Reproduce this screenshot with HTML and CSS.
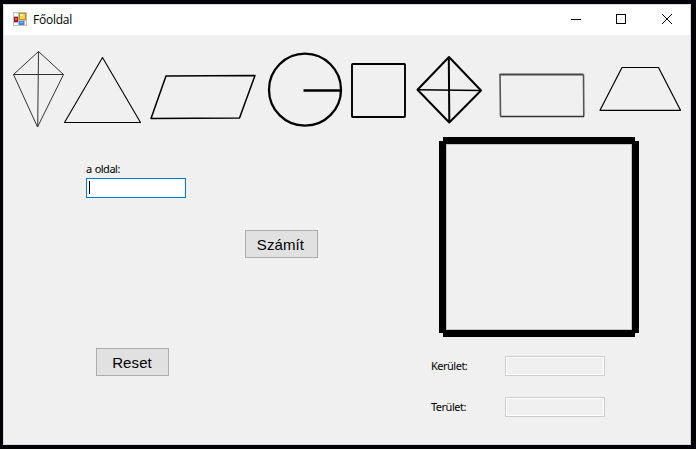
FILE: index.html
```html
<!DOCTYPE html>
<html lang="hu">
<head>
<meta charset="utf-8">
<title>Főoldal</title>
<link rel="stylesheet" href="styles.css">
</head>
<body>
<div class="desktop">
<div class="window">
  <header class="titlebar">
    <svg class="app-icon" width="14" height="14" viewBox="0 0 14 14" shape-rendering="crispEdges">
      <path fill="#b9bcc0" d="M0 0h14v14H0z"/>
      <path fill="#fff" d="M1 1h4v3H1zM1 11h4v2H1zM12 9h1v4h-1z"/>
      <path fill="#a31515" d="M1 5h4v5H1z"/><path fill="#e8695a" d="M2 6h2v2H2z"/>
      <path fill="#c98b08" d="M6 1h7v7H6z"/><path fill="#ffd34e" d="M7 2h5v5H7z"/><path fill="#fff0a8" d="M7 2h3v2H7z"/>
      <path fill="#4a83de" d="M6 9h5v4H6z"/><path fill="#8fbaf8" d="M7 10h3v1H7z"/>
    </svg>
    <h1 class="title">Főoldal</h1>
    <div class="controls">
      <svg width="45" height="30" viewBox="0 0 45 30" shape-rendering="crispEdges"><path d="M15 14.500h10"/></svg>
      <svg width="45" height="30" viewBox="0 0 45 30" shape-rendering="crispEdges"><path d="M15.500 9.500h9v9h-9z"/></svg>
      <svg width="45" height="30" viewBox="0 0 45 30"><path d="M16 9l10 10M26 9l-10 10"/></svg>
    </div>
  </header>
  <nav class="shapes">
    <svg width="60" height="95" viewBox="4 35 60 95"><path stroke="#333" stroke-width="1" d="M38.500 51.500L63.500 74.500 37.500 127 13.500 74.500zM13.500 74.500h50M38.500 51.500L37.700 127"/></svg>
    <svg width="82" height="95" viewBox="64 35 82 95"><path stroke-width="1.100" d="M102.500 57.500L140.500 122.500h-76z"/></svg>
    <svg width="116" height="95" viewBox="146 35 116 95"><path stroke-width="1.500" d="M166 76L255 75.500 239.500 118 151 118.500z"/></svg>
    <svg width="84" height="95" viewBox="262 35 84 95"><circle cx="305" cy="89.700" r="36" stroke-width="2.300"/><path stroke-width="2.500" d="M303.500 90.500H341"/></svg>
    <svg width="65" height="95" viewBox="346 35 65 95"><rect x="352" y="64" width="53" height="53" rx=".7" stroke-width="1.900"/></svg>
    <svg width="79" height="95" viewBox="411 35 79 95"><path stroke-width="2" d="M449 57L481 90.500 449.300 122.500 417.500 89.700zM448.800 57L449.300 122.500"/><path stroke-width="1.500" d="M417.500 89.700L481 90.500"/></svg>
    <svg width="102" height="95" viewBox="490 35 102 95"><path stroke="#444" stroke-width="2" d="M499.500 74.500h84"/><path stroke="#555" stroke-width="1.600" d="M583.500 74.500l.3 42M500.500 116.500l-.5-42"/><path stroke="#333" stroke-width="1.600" d="M500.500 116.500h83.500"/></svg>
    <svg width="98" height="95" viewBox="592 35 98 95"><path stroke-width="1.200" d="M622 67.500h36.500L680.500 110.300H600z"/></svg>
  </nav>
  <main class="form">
    <section class="inputs">
      <label class="label" for="side">a oldal:</label>
      <div class="field active" id="side"><span class="caret"></span></div>
      <button class="button calculate">Számít</button>
      <button class="button reset">Reset</button>
    </section>
    <section class="results">
      <svg class="preview" width="200" height="200" viewBox="0 0 200 200" shape-rendering="crispEdges">
        <path class="preview-edge" d="M7.500 7.500h185v185H7.500z"/>
        <path class="preview-bars" d="M4 0h192v7H4zM4 193h192v7H4zM0 4h7v192H0zM193 4h7v192h-7z"/>
      </svg>
      <div class="row"><span class="label">Kerület:</span><div class="field"></div></div>
      <div class="row"><span class="label">Terület:</span><div class="field"></div></div>
    </section>
  </main>
</div>
</div>
</body>
</html>
```
FILE: styles.css
```css
* {
  box-sizing: border-box;
}

body {
  margin: 0;
  background: #fff;
  color: #000;
  overflow: hidden;
}

.desktop {
  width: 696px;
  height: 449px;
  padding: 4px 5px 4px 3px;
  background: #010107;
}

.window {
  height: 441px;
  border: 1px solid #d9d9d9;
  background: #f0f0f0;
}

.titlebar {
  display: flex;
  align-items: center;
  height: 30px;
  padding-left: 9px;
  background: #fff;
}

.app-icon {
  margin-bottom: 2px;
}

.title {
  margin: 0 0 0 6px;
  font: 400 12px/30px "Open Sans", sans-serif;
  letter-spacing: -0.25px;
}

.controls {
  display: flex;
  margin: 0 -1px 0 auto;
}

.controls svg {
  fill: none;
  stroke: #000;
}

.shapes {
  display: flex;
  height: 95px;
}

.shapes svg {
  flex: none;
  overflow: visible;
  fill: none;
  stroke: #000;
  stroke-linejoin: round;
}

.form {
  display: grid;
  grid-template-columns: 427px 1fr;
}

.inputs {
  display: flex;
  flex-direction: column;
  align-items: flex-start;
  padding: 32px 0 0 82px;
}

.label {
  font: 11px/14px "Noto Sans", sans-serif;
  letter-spacing: -0.5px;
  word-spacing: 0.6px;
  white-space: nowrap;
}

.field {
  width: 100px;
  height: 20px;
  border: 1px solid #ccc;
  background: #f0f0f0;
  box-shadow: inset 0 0 0 1px #fff;
}

.field.active {
  margin-top: 2px;
  padding: 2px;
  border-color: #0078d7;
  background: #fff;
}

.caret {
  display: block;
  width: 1px;
  height: 13px;
  background: #000;
}

.button {
  width: 73px;
  height: 28px;
  padding: 1px 0 0;
  border: 1px solid #adadad;
  border-radius: 0;
  background: #e1e1e1;
  color: #000;
  font: 15px/20px "Liberation Sans", sans-serif;
  letter-spacing: 0.1px;
}

.calculate {
  margin: 32px 0 0 159px;
  padding-right: 2px;
}

.reset {
  margin: 90px 0 0 10px;
  padding-right: 1px;
}

.results {
  padding-top: 7px;
}

.preview {
  display: block;
  margin: 0 0 19px 8px;
}

.preview-edge {
  fill: none;
  stroke: #c4c4c4;
}

.preview-bars {
  fill: #000;
}

.row {
  display: grid;
  grid-template-columns: 74px 100px;
  align-items: center;
  height: 20px;
  margin-bottom: 21px;
}
```
